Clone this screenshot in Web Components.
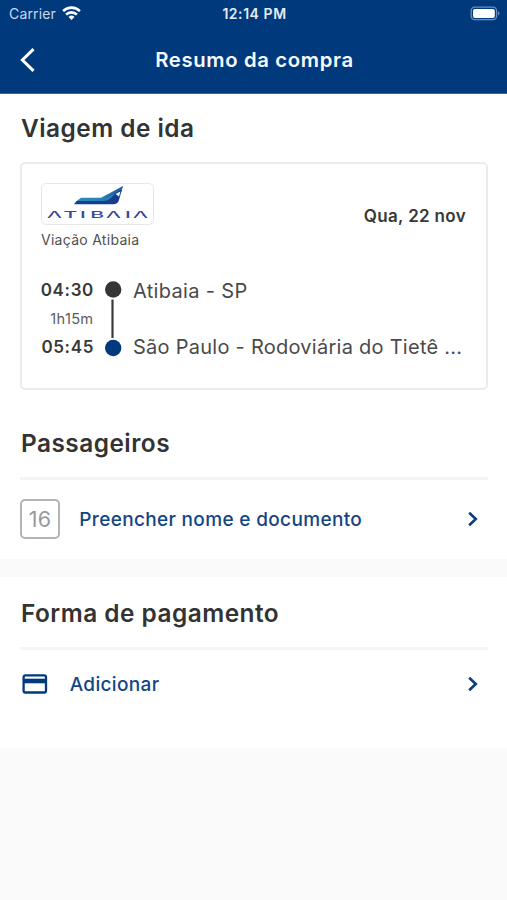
<!DOCTYPE html>
<html lang="pt-BR">
<head>
<meta charset="utf-8">
<title>Resumo da compra</title>
<style>
html,body{margin:0;padding:0}
body{width:507px;height:900px;overflow:hidden;background:#fafafa;font-family:Inter,"Liberation Sans",sans-serif;color:#333}
</style>
</head>
<body>
<purchase-page></purchase-page>
<script>
const define = (name, markup) => customElements.define(name, class extends HTMLElement {
  constructor() {
    super();
    this.attachShadow({ mode: 'open' }).innerHTML = markup;
  }
});

define('status-bar', `
<style>
:host{display:grid;grid-template-columns:1fr auto 1fr;align-items:center;height:28px;padding:0 5px 2px 9px;box-sizing:border-box;color:#e4ecf6}
.l{display:flex;align-items:center;gap:6px;font-size:14px;letter-spacing:.15px;color:#c9d8ea}
.c{font-size:14px;font-weight:600;letter-spacing:.55px;margin-right:2px}
.r{justify-self:end}
svg{display:block}
</style>
<div class="l"><span>Carrier</span>
<svg width="19" height="14" viewBox="0 0 19 14" fill="none" stroke="#fff" stroke-width="2.6"><path d="M1.1 5.1a12 12 0 0 1 16.8 0M4.1 8.6a7.7 7.7 0 0 1 10.8 0"/><path d="M9.5 14l-3-3.1a4.3 4.3 0 0 1 6 0z" fill="#fff" stroke="none"/></svg></div>
<div class="c">12:14 PM</div>
<svg class="r" width="32" height="16" viewBox="0 0 32 16"><rect x="1.2" y="2.1" width="25.4" height="12.6" rx="3.6" fill="none" stroke="#6b8fbb" stroke-width="1.3"/><rect x="3" y="3.9" width="21.8" height="9" rx="1.9" fill="#fff"/><path d="M28 6.1q3 2.3 0 4.6z" fill="#6b8fbb"/></svg>`);

define('nav-bar', `
<style>
:host{display:grid;grid-template-columns:61px 1fr 59px;align-items:center;height:64px}
svg{display:block;margin-left:19px}
h1{margin:0;text-align:center;font-size:20.3px;line-height:24px;font-weight:600;letter-spacing:.65px;color:#f7faff;white-space:nowrap}
</style>
<svg width="18" height="28" viewBox="0 0 18 28"><path d="M14.5 3.2 3.4 14 14.5 24.8" fill="none" stroke="#fff" stroke-width="3"/></svg>
<h1><slot></slot></h1>`);

define('section-title', `
<style>
:host{display:block;font-size:24.4px;line-height:31px;height:30px;font-weight:600;letter-spacing:.48px;color:#333;white-space:nowrap}
</style><slot></slot>`);

define('company-logo', `
<style>
:host{display:block;width:113px;height:42px;box-sizing:border-box;border:1.5px solid #e8e8e8;border-radius:5px;background:#fff}
svg{display:block;margin:-1px}
text{font-family:Inter,"Liberation Sans",sans-serif;font-size:9.6px;font-weight:500;fill:#36489b}
</style>
<svg width="113" height="42" viewBox="0 0 113 42">
<defs><linearGradient id="g" x1="0" x2="1" y1="0" y2="0"><stop offset="0" stop-color="#2b8cba"/><stop offset="1" stop-color="#2576b4"/></linearGradient></defs>
<path d="M40 14.8H60L82 3 77.5 15 68 18.5H35z" fill="url(#g)"/>
<path d="M63 14.5 82 3 80.2 9z" fill="#2467a8"/>
<path d="M35.6 18H63Q70 17.3 74.5 9.8L81 6.2 78 17Q76.8 21.3 72 21.3H33z" fill="#173d91"/>
<path d="M74.6 11 79.4 8.4 78 13.6z" fill="#fff"/>
<text transform="scale(2.2 1)" x="2.7 10.2 17.7 22.4 29.5 38.2 41.8" y="35">ATIBAIA</text>
<g fill="#fff"><path d="M13.5 30 18.6 35.3H8.4z"/><path d="M72.4 30 77.5 35.3H67.3z"/><path d="M99.4 30 104.5 35.3H94.3z"/></g>
</svg>`);

define('trip-route', `
<style>
:host{display:grid;grid-template-columns:53px 39px 1fr;grid-template-rows:29px 29px 28px;align-items:center}
.t{font-size:17px;font-weight:600;letter-spacing:.65px;justify-self:end;color:#383838;line-height:22px;white-space:nowrap}
.d{font-size:14.6px;letter-spacing:.3px;color:#5c5c5c;justify-self:end;margin-right:.6px}
.p{font-size:20px;letter-spacing:.26px;line-height:26px;color:#4a4a4a;white-space:nowrap}
.p.from{padding-top:2px;letter-spacing:.33px}
svg{grid-column:2;grid-row:1 / 4;display:block;margin-left:10px}
.t,.d{grid-column:1}.p{grid-column:3}
</style>
<span class="t" style="grid-row:1"><slot name="start"></slot></span>
<span class="d" style="grid-row:2"><slot name="duration"></slot></span>
<span class="t" style="grid-row:3"><slot name="end"></slot></span>
<svg width="18" height="86" viewBox="0 0 18 86"><path d="M8.5 24.5V63" stroke="#3a3a3a" stroke-width="2.2"/><circle cx="9.2" cy="14.5" r="8.2" fill="#363636"/><circle cx="9.2" cy="73" r="8.2" fill="#003a7d"/></svg>
<span class="p from" style="grid-row:1"><slot name="from"></slot></span>
<span class="p" style="grid-row:3"><slot name="to"></slot></span>`);

define('trip-card', `
<style>
:host{display:block;width:468px;height:228px;box-sizing:border-box;border:2px solid #ebebeb;border-radius:5px;padding:19px 20px 0 19px;background:#fff}
.top{display:flex;justify-content:space-between;align-items:flex-start}
.date{font-size:17px;font-weight:600;letter-spacing:.33px;line-height:22px;margin-top:22px;color:#383838}
.name{font-size:14px;line-height:18px;margin-top:6px;letter-spacing:.28px;color:#505050}
.route{margin-top:26px}
</style>
<div class="top"><div><company-logo></company-logo><div class="name"><slot name="company"></slot></div></div><div class="date"><slot name="date"></slot></div></div>
<div class="route"><slot></slot></div>`);

define('action-row', `
<style>
:host{display:flex;align-items:center;height:78px;border-top:3px solid #f5f5f5;color:#134585;font-size:19px;font-weight:500;letter-spacing:.34px}
.label{flex:1;white-space:nowrap}
.go{display:block;margin-right:9px}
</style>
<slot name="icon"></slot><span class="label"><slot></slot></span>
<svg class="go" width="12" height="18" viewBox="0 0 12 18"><path d="M2.2 2.7 8.8 9 2.2 15.3" fill="none" stroke="#0c3c80" stroke-width="2.6"/></svg>`);

define('seat-badge', `
<style>
:host{display:flex;align-items:center;justify-content:center;box-sizing:border-box;width:40px;height:40px;margin-right:19.3px;border:2px solid #b4b4b6;border-radius:5px;color:#98989c;font-size:21.5px;font-weight:400;letter-spacing:.3px}
</style><slot></slot>`);

define('card-icon', `
<style>:host{display:block;width:28px;margin-right:21.7px}svg{display:block}</style>
<svg width="28" height="22" viewBox="0 0 28 22"><rect x="3.6" y="2.3" width="22.4" height="17.2" rx="1.8" fill="none" stroke="#003a7d" stroke-width="2.3"/><path d="M3.5 8H26" stroke="#003a7d" stroke-width="4.6"/></svg>`);

define('purchase-page', `
<style>
:host{display:flex;flex-direction:column;width:507px;height:900px;background:#fafafa}
header{background:#003a7d;height:94px;box-sizing:border-box;border-bottom:1px solid #33649c}
section{background:#fff;padding:0 19px 0 20px;box-sizing:border-box}
.trip{height:465px;padding-top:19px}
section section-title{margin-left:1px}
trip-card{margin-top:19px}
.pass{margin-top:38px}
.pass + action-row{margin-top:19px}
.pay{margin-top:18px;height:171px;padding-top:21px}
.pay action-row{margin-top:19px;height:68px}
</style>
<header><status-bar></status-bar><nav-bar>Resumo da compra</nav-bar></header>
<section class="trip">
<section-title>Viagem de ida</section-title>
<trip-card>
<span slot="company">Viação Atibaia</span><span slot="date">Qua, 22 nov</span>
<trip-route><span slot="start">04:30</span><span slot="duration">1h15m</span><span slot="end">05:45</span><span slot="from">Atibaia - SP</span><span slot="to">São Paulo - Rodoviária do Tietê ...</span></trip-route>
</trip-card>
<section-title class="pass">Passageiros</section-title>
<action-row><seat-badge slot="icon">16</seat-badge>Preencher nome e documento</action-row>
</section>
<section class="pay">
<section-title>Forma de pagamento</section-title>
<action-row><card-icon slot="icon"></card-icon>Adicionar</action-row>
</section>`);
</script>
</body>
</html>
